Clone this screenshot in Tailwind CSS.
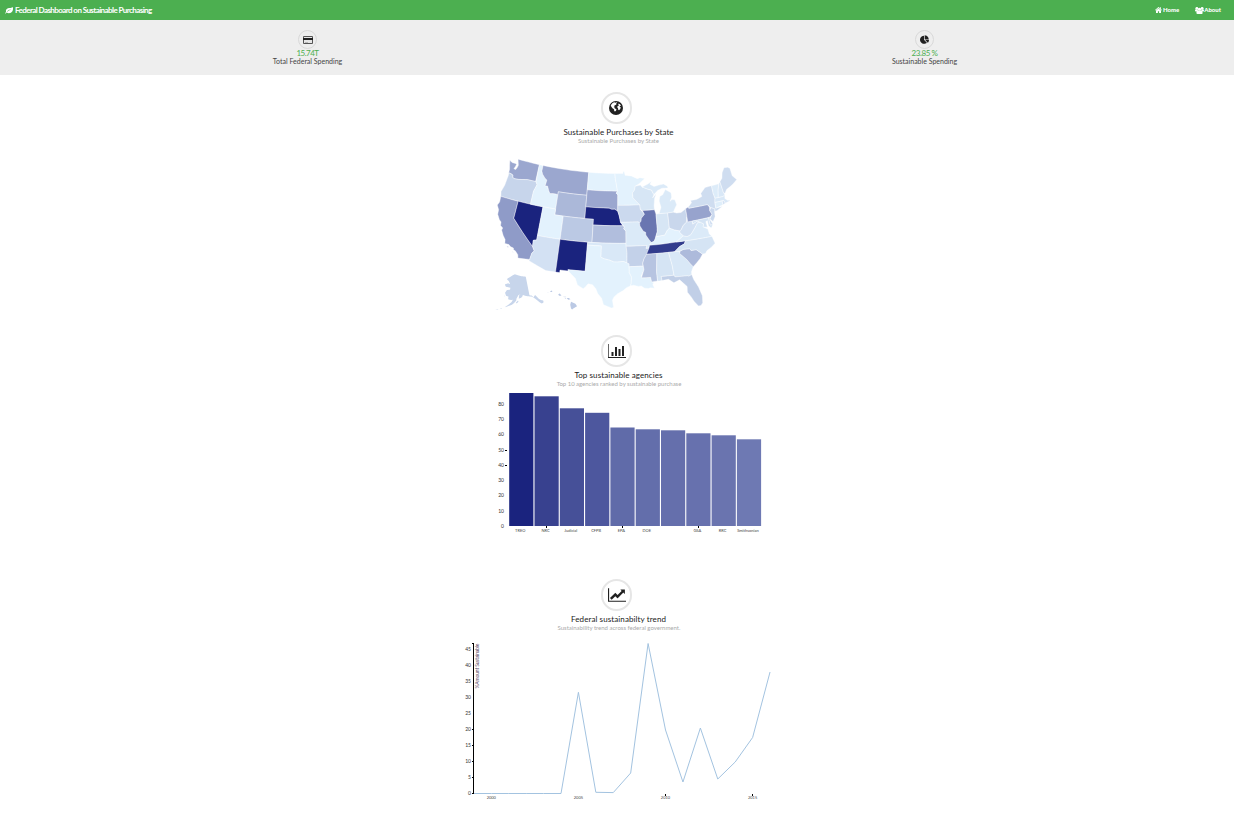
<!DOCTYPE html>
<html lang="en">
<head>
<meta charset="utf-8">
<title>Federal Dashboard on Sustainable Purchasing</title>
<script src="https://cdn.jsdelivr.net/npm/@tailwindcss/browser@4"></script>
</head>
<body class="bg-white font-[Lato,sans-serif] text-[#212121] overflow-hidden">
<header class="h-5 bg-[#4caf50] text-white flex items-center justify-between pl-[5px] pr-[13px]">
  <div class="flex items-center gap-[2px]">
    <svg class="w-[8px] h-[7px]" viewBox="0 0 16 14" fill="currentColor"><path d="M15.800 1C15 0 14 2 11 2.200 7 2.300 2 3 1.800 8c0 1 .2 1.600.4 2L.3 12c-.6.8.3 1.600 1 1l2-2c2 1.600 5.500 2 8.500.5C16 9.300 16.500 4 15.800 1zM4 9.200c2-2.800 4.500-3.900 7.500-4.200v.5C9 6 6.500 7.300 4.500 9.500z"/></svg>
    <span class="text-[8px] leading-[10px] font-bold tracking-[-0.58px] whitespace-nowrap">Federal Dashboard on Sustainable Purchasing</span>
  </div>
  <nav class="flex items-center gap-[16px] text-[6px] leading-[8px] font-black">
    <a class="flex items-center gap-px"><svg class="w-[7px] h-[6px]" viewBox="0 0 14 12" fill="currentColor"><path d="M7 0 0 6l1 1 6-5 6 5 1-1-2.300-2V.6H9.800v1.700zM7 3 2 7.200V12h3.800V8.500h2.400V12H12V7.200z"/></svg><span>Home</span></a>
    <a class="flex items-center"><svg class="w-[9px] h-[7px]" viewBox="0 0 16 14" preserveAspectRatio="none" fill="currentColor"><circle cx="3.300" cy="2.500" r="2.500"/><circle cx="12.700" cy="2.500" r="2.500"/><circle cx="8" cy="4.500" r="3"/><path d="M0 8.500C0 5 1 4.500 2 4.500h2.500L5 8H3L2.500 9zM16 8.500c0-3.500-1-4-2-4h-2.500L11 8h2l.5 1zM2.500 12c0-3.500 1-4.500 2.500-4.800h6c1.500.3 2.500 1.300 2.500 4.800 0 1.300-.7 2-2 2h-7c-1.300 0-2-.7-2-2z"/></svg><span>About</span></a>
  </nav>
</header>

<section class="h-[55px] bg-[#eeeeee] grid grid-cols-2 text-center pt-[10px] -ml-px pr-px">
  <div class="flex flex-col items-center">
    <div class="size-[19px] rounded-full border border-[#d9d9d9] flex items-center justify-center">
      <svg class="w-[10px] h-[8px]" viewBox="0 0 10 8"><path fill="#e6e6e6" stroke="#555" d="M.5.5h9v7h-9z"/><path fill="#212121" d="M0 2h10v2H0z"/><path fill="#999" d="M2 6h3v.6H2z"/></svg>
    </div>
    <div class="text-[8px] leading-[8px] text-[#4caf50] tracking-[-0.5px]">15.74T</div>
    <div class="text-[7px] leading-[9px] text-[#444]">Total Federal Spending</div>
  </div>
  <div class="flex flex-col items-center">
    <div class="size-[19px] rounded-full border border-[#d9d9d9] flex items-center justify-center">
      <svg class="w-[9px] h-[9px]" viewBox="0 0 1728 1664" fill="#212121"><path d="M768 890l546 546q-106 108-247.500 168T768 1664q-209 0-385.500-103T103 1281.500 0 896t103-385.500T382.500 231 768 128v762zm187 6h773q0 157-60 298.500T1500 1442zm709-128H896V0q209 0 385.500 103T1561 382.500 1664 768z"/></svg>
    </div>
    <div class="text-[8px] leading-[8px] text-[#4caf50] tracking-[-0.4px]">23.85 %</div>
    <div class="text-[7px] leading-[9px] text-[#444]">Sustainable Spending</div>
  </div>
</section>

<main>
  <section class="h-[243px] pt-[17px] flex flex-col items-center">
    <div class="w-[31px] h-[32px] mr-[2px] rounded-full border-2 border-[#e6e6e6] flex items-center justify-center">
      <svg class="size-[14px]" viewBox="0 0 28 28"><circle cx="14" cy="14" r="14" fill="#212121"/><path fill="#fff" d="M3.500 9C5 6 7 3.500 10.500 2.500l2.500 1 2-.8 1.500 1-2.500 1.800 1 1.500L12 8.500l-2.500 2 2 1.200-1 2 1.500 1.500 3 1.200-1 3-2 1.500-1.500-1-.5-3.500L7 14.500 5 12zM19 5l3 1.500 2.500 4-2-1-1.500 2 2.500 1-1 3.500-2.500 2.500-1.500-1L18 14.500l-1.500-2 .8-2.500L20 9 18.500 7z"/></svg>
    </div>
    <h2 class="mt-[3px] ml-[3px] text-[8px] leading-[10px] tracking-[0.08px]">Sustainable Purchases by State</h2>
    <p class="ml-[3px] text-[6px] leading-[7px] text-[#aaa]">Sustainable Purchases by State</p>
    <svg id="map" class="mt-px w-[260px] h-[165px]" viewBox="487 146 260 165" stroke="#fff" stroke-width="0.4" stroke-linejoin="round"></svg>
  </section>

  <section class="h-[244px] pt-[17px] flex flex-col items-center">
    <div class="w-[31px] h-[32px] mr-[2px] rounded-full border-2 border-[#e6e6e6] flex items-center justify-center">
      <svg class="w-[18px] h-[14px] ml-[2px]" viewBox="0 0 18 14" fill="#212121"><path fill="#666" d="M0 0h1v13H0z"/><path d="M0 13h18v1H0zM3.500 8h2v4h-2zM7 3h2v9H7zM10.500 5h2v7h-2zM14 2h2v10h-2z"/></svg>
    </div>
    <h2 class="mt-[3px] ml-[3px] text-[8px] leading-[10px] tracking-[0.08px]">Top sustainable agencies</h2>
    <p class="ml-[4px] text-[6px] leading-[7px] text-[#aaa] tracking-[-0.02px]">Top 10 agencies ranked by sustainable purchase</p>
    <svg id="bars" class="mt-px w-[290px] h-[150px]" viewBox="472 388 290 150"></svg>
  </section>

  <section class="pt-[17px] flex flex-col items-center">
    <div class="w-[31px] h-[32px] mr-[2px] rounded-full border-2 border-[#e6e6e6] flex items-center justify-center">
      <svg class="w-[18px] h-[14px] ml-[2px]" viewBox="0 0 2048 1536" fill="#212121"><path d="M2048 1408v128H0V0h128v1408zM1920 160v435q0 21-19.500 29.500T1865 617l-121-121-633 633q-10 10-23 10t-23-10L832 896l-416 416-192-192 585-585q10-10 23-10t23 10l233 233 464-464-121-121q-16-16-7.500-35.500T1453 128h435q14 0 23 9t9 23z"/></svg>
    </div>
    <h2 class="mt-[3px] ml-[3px] text-[8px] leading-[10px] tracking-[0.1px]">Federal sustainabilty trend</h2>
    <p class="ml-[4px] text-[6px] leading-[7px] text-[#aaa]">Sustainability trend across federal government.</p>
    <svg id="trend" class="mt-px w-[330px] h-[175px]" viewBox="452 632 330 175"></svg>
  </section>
</main>

<script>
const NS = 'http://www.w3.org/2000/svg';
function add(parent, tag, attrs, text) {
  const el = document.createElementNS(NS, tag);
  for (const k in attrs) el.setAttribute(k, attrs[k]);
  if (text !== undefined) el.textContent = text;
  parent.appendChild(el);
  return el;
}
const mix = t => {
  const a = [227, 242, 253], b = [26, 35, 126];
  return 'rgb(' + a.map((v, i) => Math.round(v + (b[i] - v) * t)).join(',') + ')';
};

/* Albers equal-area projection, with insets for Alaska and Hawaii */
const R = Math.PI / 180;
function albers(lon0, cLon, cLat, p1, p2, k, tx, ty) {
  const n = (Math.sin(p1 * R) + Math.sin(p2 * R)) / 2;
  const C = Math.cos(p1 * R) ** 2 + 2 * n * Math.sin(p1 * R);
  const raw = (lon, lat) => {
    const r = Math.sqrt(C - 2 * n * Math.sin(lat * R)) / n, a = lon * R * n;
    return [r * Math.sin(a), r * Math.cos(a)];
  };
  const c = raw(cLon, cLat);
  return (lon, lat) => {
    const p = raw(lon + lon0, lat);
    return [tx + k * (p[0] - c[0]), ty + k * (p[1] - c[1])];
  };
}
const K = 332, X = 617, Y = 234.4;
const lower48 = albers(96, -0.6, 38.7, 29.5, 45.5, K, X, Y);
const alaska = albers(154, -2, 58.5, 55, 65, K * 0.35, X - 0.309 * K, Y + 0.201 * K);
const hawaii = albers(157, -3, 19.9, 8, 18, K, X - 0.206 * K, Y + 0.212 * K);

/* [share, "west-longitude,latitude ..."]; '|' separates rings */
const states = {
WA:[.36,"124.7,48.4 124.0,48.15 123.1,48.15 122.75,48.1 122.9,47.6 123.1,47.2 122.6,47.15 122.35,47.6 122.25,48.0 122.5,48.5 122.76,49 117.03,49 117.04,46.0 119.0,46.0 119.6,45.92 121.2,45.65 122.2,45.57 122.8,45.7 122.9,46.1 123.4,46.25 124.05,46.28 124.1,46.9 124.4,47.6"],
OR:[.14,"124.0,46.28 123.4,46.2 122.9,46.1 122.8,45.7 122.2,45.57 121.2,45.65 119.6,45.92 119.0,46 116.92,46 116.5,45.5 117.0,44.3 117.03,42 124.2,42 124.5,42.8 124.1,44 123.95,45.8"],
CA:[.42,"124.2,42 120,42 120,39 114.63,35.0 114.1,34.3 114.5,33.9 114.7,32.72 117.12,32.53 117.3,33.1 118.0,33.65 118.4,33.75 118.5,34.03 119.2,34.15 119.6,34.42 120.5,34.45 120.65,35.1 121.3,35.7 121.9,36.5 121.8,36.9 122.4,37.2 122.5,37.8 123.0,38.1 123.7,38.9 123.8,39.7 124.4,40.4 124.1,41|119.9,34.05 119.6,34.05 119.6,33.95 119.9,33.95|118.6,33.45 118.3,33.35 118.4,33.3"],
NV:[1,"120,42 114.04,42 114.04,36.2 114.4,36.15 114.74,36.05 114.63,35.0 120,39"],
ID:[0,"117.03,49 116.05,49 116.05,48 115.7,47.5 114.9,46.9 114.35,46.65 114.5,45.6 113.9,45.65 113.4,44.9 113.0,44.45 112.3,44.55 111.5,44.55 111.05,44.48 111.05,42 117.03,42 117.0,44.3 116.5,45.5 116.92,46"],
MT:[.36,"116.05,49 104.05,49 104.05,45 111.05,45 111.05,44.48 111.5,44.55 112.3,44.55 113.0,44.45 113.4,44.9 113.9,45.65 114.5,45.6 114.35,46.65 114.9,46.9 115.7,47.5 116.05,48"],
WY:[.28,"111.05,45 104.05,45 104.05,41 111.05,41"],
UT:[0,"114.04,42 111.05,42 111.05,41 109.05,41 109.05,37 114.04,37"],
CO:[.2,"109.05,41 102.05,41 102.05,37 109.05,37"],
AZ:[.08,"114.04,37 109.05,37 109.05,31.33 111.07,31.33 114.8,32.5 114.7,32.72 114.5,33.9 114.1,34.3 114.63,35.0 114.74,36.05 114.4,36.15 114.04,36.2"],
NM:[1,"109.05,37 103,37 103.06,32 106.6,32 106.5,31.78 108.2,31.78 108.2,31.33 109.05,31.33"],
ND:[0,"104.05,49 97.23,49 97.1,48 96.8,47 96.56,45.94 104.05,45.94"],
SD:[.36,"104.05,45.94 96.56,45.94 96.85,45.6 96.45,45.3 96.45,43.5 96.45,42.5 97.2,42.85 97.9,42.8 98.5,43 104.05,43"],
NE:[1,"104.05,43 98.5,43 97.9,42.8 97.2,42.85 96.45,42.5 96.1,41.7 95.9,41.0 95.8,40.6 95.3,40 102.05,40 102.05,41 104.05,41"],
KS:[.25,"102.05,40 95.3,40 94.9,39.8 95.1,39.5 94.6,39.1 94.62,37 102.05,37"],
OK:[.05,"103,37 94.62,37 94.43,35.4 94.48,33.64 95.2,33.9 96.5,33.8 97.2,33.8 98.1,34.1 99.2,34.3 100,34.56 100,36.5 103,36.5"],
TX:[0,"103,36.5 100,36.5 100,34.56 99.2,34.3 98.1,34.1 97.2,33.8 96.5,33.8 95.2,33.9 94.48,33.64 94.04,33.5 94.04,32 93.6,31.2 93.7,30.1 93.85,29.7 94.7,29.35 95.3,28.9 96.4,28.35 97.1,27.8 97.4,27.2 97.15,25.95 97.6,25.88 99.1,26.4 99.5,27.5 100.3,28.3 100.7,29.1 101.4,29.77 102.3,29.88 102.8,29.3 103.2,28.98 104.4,29.55 104.9,30.6 106.5,31.78 106.6,32 103.06,32"],
MN:[0,"97.23,49 95.15,49 95.15,49.38 94.8,49.3 94.6,48.7 93.0,48.55 91.5,48.05 90.8,48.2 89.6,48.0 91.0,47.2 92.1,46.75 92.3,46.1 92.85,45.6 92.75,44.75 91.2,43.5 96.45,43.5 96.45,45.3 96.85,45.6 96.56,45.94 96.8,47 97.1,48"],
IA:[.12,"96.45,43.5 91.2,43.5 91.1,42.7 90.2,41.85 91.0,41.2 91.1,40.7 91.45,40.4 91.75,40.6 95.8,40.6 95.9,41 96.1,41.7 96.45,42.5"],
MO:[.04,"95.8,40.6 91.75,40.6 91.45,40.4 91.4,39.9 90.7,38.95 90.2,38.75 90.2,38.3 89.5,37.4 89.1,36.95 89.5,36.5 89.7,36 90.35,36 90.1,36.5 94.62,36.5 94.6,39.1 95.1,39.5 94.9,39.8"],
AR:[.16,"94.62,36.5 90.1,36.5 90.35,36 89.7,36 90.1,35.1 90.9,34.2 91.2,33.5 91.15,33 94.04,33 94.04,33.5 94.48,33.64 94.43,35.4"],
LA:[0,"94.04,33 91.15,33 91.0,32.4 91.6,31.4 91.6,31 89.75,31 89.6,30.2 89.2,30.1 89.4,29.7 89.1,29.1 89.9,29.2 90.3,29.1 91.1,29.2 91.7,29.6 92.3,29.55 93.2,29.78 93.85,29.7 93.7,30.1 93.6,31.2 94.04,32"],
WI:[.06,"92.3,46.1 92.1,46.75 90.8,46.9 90.4,46.55 89.1,46.15 88.1,45.9 87.8,45.35 87.6,45.1 88.0,44.55 87.0,45.25 87.5,44.5 87.8,43.2 87.8,42.5 90.65,42.5 91.1,42.7 91.2,43.5 92.75,44.75 92.85,45.6"],
IL:[.6,"90.65,42.5 87.8,42.5 87.53,41.7 87.53,39.3 87.6,38.7 88.0,37.95 88.1,37.5 88.5,37.1 89.1,36.95 89.5,37.4 90.2,38.3 90.2,38.75 90.7,38.95 91.4,39.9 91.45,40.4 91.1,40.7 91,41.2 90.2,41.85"],
IN:[.06,"87.53,41.7 86.8,41.76 84.8,41.76 84.82,39.1 85.4,38.7 86.0,38.0 86.8,37.95 88.0,37.85 87.6,38.7 87.53,39.3"],
MI:[.04,"86.8,41.76 84.8,41.72 83.45,41.73 83.1,42.2 82.45,42.9 82.7,43.8 83.4,43.9 83.9,43.65 83.4,44.3 83.4,45.1 84.7,45.75 85.5,44.9 86.2,44.7 86.5,43.9 86.2,42.8|90.4,46.55 88.9,47.0 87.9,47.45 88.4,46.95 87.4,46.5 86.2,46.65 85.0,46.75 84.1,46.3 84.0,45.95 85.5,46.05 86.6,45.75 87.6,45.1 87.8,45.35 88.1,45.9 89.1,46.15"],
OH:[.13,"84.8,41.7 83.45,41.73 82.7,41.5 81.7,41.5 80.52,41.98 80.52,40.6 80.85,39.7 81.7,39.2 82.2,38.6 82.6,38.4 83.7,38.65 84.82,39.1"],
KY:[0,"89.5,36.5 89.1,36.95 88.5,37.1 88.0,37.85 86.8,37.95 86,38 85.4,38.7 84.82,39.1 83.7,38.65 82.6,38.4 82.6,38.1 81.97,37.5 83.68,36.6 88.05,36.5"],
TN:[.88,"89.5,36.5 88.05,36.5 83.68,36.6 81.68,36.59 82.0,36.1 83.1,35.75 84.3,35.0 90.3,35.0 89.7,36"],
MS:[.22,"90.3,35 88.2,35 88.1,34.9 88.45,31.9 88.4,30.3 89.6,30.2 89.75,31 91.6,31 91.0,32.4 91.2,33.5 90.9,34.2"],
AL:[.07,"88.2,35 85.6,35 85.15,32.8 85.0,31 87.6,31 87.5,30.3 88.1,30.25 88.4,30.3 88.45,31.9 88.1,34.9"],
GA:[.05,"85.6,35 83.1,35 83.3,34.6 82.0,33.4 81.4,32.6 80.9,32.0 81.4,31.2 81.45,30.7 82.1,30.5 82.2,30.6 84.86,30.7 85.0,31 85.15,32.8"],
FL:[.17,"87.6,31 85,31 84.86,30.7 82.2,30.6 82.1,30.5 81.45,30.7 81.2,29.8 80.5,28.4 80.05,26.8 80.2,25.6 80.6,25.15 81.1,25.15 81.8,26.1 82.2,26.9 82.8,27.8 82.7,28.8 83.5,29.6 84.0,30.1 85.2,29.7 86.2,30.4 87.5,30.3"],
SC:[.27,"83.1,35 82.3,35.2 81.04,35.15 80.8,34.8 79.7,34.8 78.55,33.86 79.2,33.2 80.0,32.6 80.9,32.0 81.4,32.6 82.0,33.4 83.3,34.6"],
NC:[.07,"84.3,35 83.1,35.75 82.0,36.1 81.68,36.59 75.85,36.55 75.5,35.25 76.5,34.7 77.5,34.3 77.95,33.85 78.55,33.86 79.7,34.8 80.8,34.8 81.04,35.15 82.3,35.2 83.1,35"],
VA:[.04,"83.68,36.6 81.97,37.5 81.2,37.25 80.3,37.5 79.3,38.4 78.4,39.3 77.75,39.3 77.1,38.9 77.3,38.4 76.4,37.9 76.3,37.0 75.85,36.55 81.68,36.59"],
WV:[.08,"82.6,38.4 82.2,38.6 81.7,39.2 80.85,39.7 80.52,40.6 80.52,39.72 79.48,39.72 79.48,39.2 78.4,39.6 77.75,39.3 78.4,39.3 79.3,38.4 80.3,37.5 81.2,37.25 81.97,37.5 82.6,38.1"],
PA:[.38,"80.52,42 79.76,42.27 79.76,42 75.35,42 75.0,41.5 75.1,40.9 74.75,40.2 75.4,39.8 80.52,39.72"],
NY:[.1,"79.76,42.27 78.9,42.85 79.05,43.25 77.5,43.25 76.2,43.55 76.3,44.1 75.0,44.95 73.35,45 73.4,43.7 73.25,42.75 73.5,42.05 73.6,41.1 72.0,41.1 73.5,40.6 74.0,40.6 73.9,41 74.7,41.35 75.35,42 79.76,42"],
VT:[.03,"73.35,45 71.5,45 72.05,44 72.45,42.73 73.25,42.75 73.4,43.7"],
NH:[.05,"71.5,45 71.1,45.3 70.97,43.4 70.8,42.9 71.3,42.7 72.45,42.73 72.05,44"],
ME:[.1,"71.1,45.3 70.4,45.8 70.0,46.7 69.2,47.45 68.3,47.35 67.8,47.07 67.8,45.7 67.0,44.85 68.2,44.3 69.1,44.0 70.0,43.75 70.7,43.1 70.97,43.4"],
MA:[.05,"73.25,42.75 71.3,42.7 70.8,42.9 71.0,42.3 70.55,41.9 70.0,41.8 70.2,42.08 69.95,41.7 70.6,41.6 71.2,41.5 71.4,42.02 73.5,42.05"],
RI:[.08,"71.8,42.02 71.4,42.02 71.2,41.5 71.85,41.35"],
CT:[.02,"73.5,42.05 71.8,42.02 71.85,41.35 73.6,41.05"],
NJ:[.12,"74.7,41.35 73.9,41 74.1,40.4 74.2,39.7 74.9,38.95 75.5,39.5 74.75,40.2 75.1,40.9"],
DE:[.1,"75.75,39.8 75.4,39.8 75.5,39.4 75.1,38.6 75.1,38.45 75.7,38.45"],
MD:[.07,"79.48,39.72 75.75,39.75 75.7,38.45 75.1,38.45 75.6,37.95 76.1,38.4 76.1,39.3 76.5,39.2 76.4,38.2 77.3,38.4 77.1,38.9 77.75,39.3 78.4,39.6 79.48,39.2"],
};
const AK = [.14,"141,69.65 141,60.3 139,59.9 137.5,58.9 136.5,59.4 135.5,59.7 134.5,58.8 133.2,57.5 131.8,56.5 130,55.9 130.2,55 132,54.8 133.5,55.7 134.6,56.7 136.3,58 138,59 139.8,59.5 143,60 145.5,60.4 147.5,60.9 148.5,60 150,59.5 151.8,59.2 151.5,60.8 150,61.2 152,61 154,59.3 154.3,58.3 156.5,57 158.5,56 161,55.4 164,54.6 161.5,55.9 158.5,57.5 157.5,58.7 159,58.5 162,58.7 162,60 164.5,60.3 166,61.6 164.5,63.1 161.2,63.5 161,64.4 163.5,64.5 166.3,64.6 168,65.6 164.5,66.5 161.8,66.2 164,67.6 166.6,68.3 166,68.9 163,69.7 160,70.6 156.6,71.3 152,70.8 147,70.2|154.5,57.3 153.8,56.9 152.2,57.7 152.6,58.3 153.5,57.9|168,53.5 166.3,54 166.6,53.6|171.5,52.5 169,53 169.2,52.7|166.4,60.2 165.6,60 166,59.8|171.7,63.6 169.5,63.2 170.5,63.4"];
const HI = [.2,"155.9,20.25 155.1,19.9 154.8,19.5 155.5,19.1 155.7,18.92 155.9,19.1 156.05,19.75|156.7,20.9 156.3,20.9 156.0,20.7 156.4,20.6|157.3,21.15 156.75,21.15 156.9,21.05 157.3,21.1|158.25,21.55 157.95,21.7 157.65,21.3 158.1,21.3|159.75,22.1 159.4,22.2 159.35,21.95 159.65,21.95|157.05,20.9 156.8,20.85 156.95,20.75|160.2,21.95 160.05,21.95 160.15,21.85"];

function ringPath(ring, proj) {
  const pts = ring.trim().split(/\s+/).map(s => s.split(',').map(Number));
  const out = [];
  pts.forEach((p, i) => {
    const q = pts[(i + 1) % pts.length];
    const steps = Math.max(1, Math.ceil(Math.abs(q[0] - p[0]) / 1.5));
    for (let j = 0; j < steps; j++) {
      const lon = p[0] + (q[0] - p[0]) * j / steps, lat = p[1] + (q[1] - p[1]) * j / steps;
      out.push(proj(-lon, lat).map(v => v.toFixed(2)).join(','));
    }
  });
  return 'M' + out.join('L') + 'Z';
}
const map = document.getElementById('map');
const draw = (s, proj) => add(map, 'path', { fill: mix(s[0]), d: s[1].split('|').map(r => ringPath(r, proj)).join('') });
Object.values(states).forEach(s => draw(s, lower48));
draw(AK, alaska).setAttribute('stroke', 'none');
draw(HI, hawaii).setAttribute('stroke', 'none');

/* Agencies */
const bars = document.getElementById('bars');
const label = { 'font-size': 5, fill: '#333' };
[['TREO',393,'#1a237e'],['NRC',396.3,'#38418f'],['Judicial',408.3,'#465098'],['CFPB',412.8,'#4d579e'],['EPA',427.5,'#606ba9'],
 ['DOE',429.3,'#636eab'],['',430.3,'#656fac'],['GSA',433.3,'#6771ae'],['RRC',435.3,'#6a74af'],['Smithsonian',439.3,'#6e79b3']]
.forEach(([name, y, fill], i) => {
  const x = 509.2 + i * 25.3;
  add(bars, 'rect', { x, y, width: 24.2, height: 526 - y, fill });
  add(bars, 'text', { x: x + 11, y: 532, 'font-size': 4, fill: '#444', 'text-anchor': 'middle' }, name);
  if ([1, 4, 7].includes(i)) add(bars, 'rect', { x: Math.round(x + 11.5), y: 526, width: 1, height: 2, fill: '#000' });
});
for (let v = 0; v <= 80; v += 10) {
  const y = 526 - v * 1.522;
  add(bars, 'text', { ...label, x: 504, y: y + 1.8, 'text-anchor': 'end' }, v);
  if (v === 40 || v === 50) add(bars, 'rect', { x: 505, y: Math.round(y), width: 2, height: 1, fill: '#000' });
}

/* Trend */
const trend = document.getElementById('trend');
const ys = [793.5,793.5,793.5,793.5,793.5,793.5,692.3,792.3,792.6,773,643.5,730,782,728,779,762,737.5,672];
add(trend, 'polyline', { points: ys.map((y, i) => (473.9 + i * 17.42) + ',' + y).join(' '), fill: 'none', stroke: '#a3c3e0', 'stroke-width': 1 });
add(trend, 'rect', { x: 473, y: 643, width: 1, height: 151, fill: '#000' });
add(trend, 'rect', { x: 472, y: 643, width: 2, height: 1, fill: '#000' });
for (let v = 0; v <= 45; v += 5) {
  const y = 793.5 - v * 3.2;
  add(trend, 'text', { ...label, x: 471, y: y + 1.6, 'text-anchor': 'end' }, v);
  if (v <= 20) add(trend, 'rect', { x: 472, y: Math.round(y - .5), width: 1, height: 1, fill: '#000' });
}
[2000, 2005, 2010, 2015].forEach((yr, i) => {
  const x = 491.3 + i * 87.1;
  add(trend, 'text', { x, y: 799, 'font-size': 4, fill: '#444', 'text-anchor': 'middle' }, yr);
  if (i > 1) add(trend, 'rect', { x: Math.floor(x), y: 794, width: 1, height: 2, fill: '#000' });
});
add(trend, 'text', { transform: 'translate(479,643.5) rotate(-90)', 'font-size': 5, fill: '#5b4a66', 'text-anchor': 'end', textLength: 45 }, '%Amount Sustainable');
</script>
</body>
</html>
